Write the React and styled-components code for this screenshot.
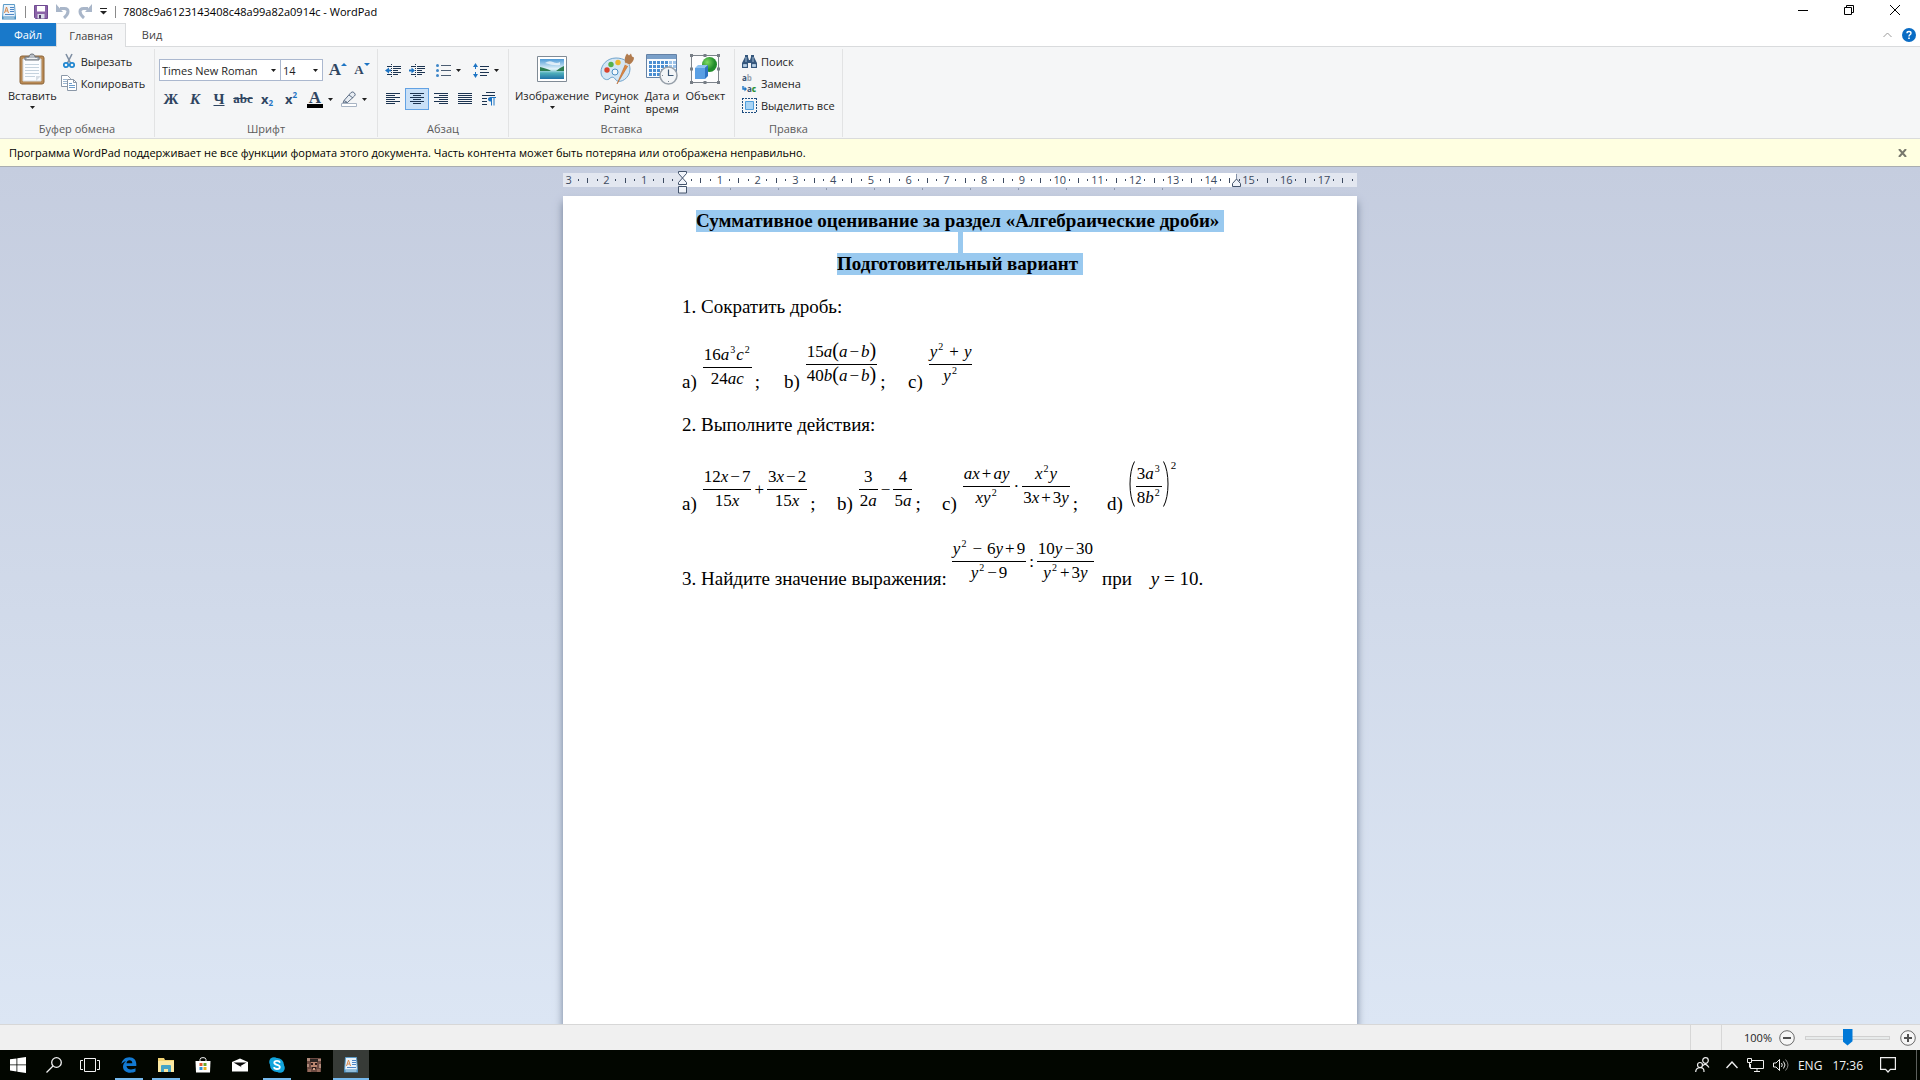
import React, { useState } from 'react';
import styled, { createGlobalStyle } from 'styled-components';

const rulerLabels = ['3', '2', '1', '', ...Array.from({ length: 17 }, (_, i) => String(i + 1))];

/* ---------- icons ---------- */

const Arrow = () => (
  <svg width="5" height="3" viewBox="0 0 5 3"><path d="M0 0h5L2.5 3z" fill="#1e1e1e" /></svg>
);

const WordPadIcon = () => (
  <svg width="16" height="16" viewBox="0 0 16 16">
    <path d="M2.5.5h11l1 13.500h-13z" fill="#e9f3fb" stroke="#5b9bc8" />
    <path d="M1 12.500h14v3H1z" fill="#4a8fc0" />
    <path d="M2.500 13.500h11v1h-11z" fill="#d5e8f5" />
    <path d="M3.500 9 5.500 3l2 6M4.200 7h2.600" fill="none" stroke="#d98a4e" />
    <path d="M9 3.500h4M9 5.500h4M9 7.500h4M4 10.500h9" stroke="#4f86c6" />
  </svg>
);

const SaveIcon = () => (
  <svg width="14" height="14" viewBox="0 0 14 14">
    <path d="M.5.5h13v13H1.500l-1-1z" fill="#8b63a8" stroke="#6f4a91" />
    <path d="M3 1h8v5.500H3z" fill="#fff" />
    <path d="M3.500 9h7v4.500h-7z" fill="#d9dce8" />
    <path d="M5 10h2v3.500H5z" fill="#4b3b68" />
  </svg>
);

const UndoIcon = ({ flip }) => (
  <svg width="14" height="15" viewBox="0 0 14 15">
    <g transform={flip ? 'translate(14 0) scale(-1 1)' : undefined} fill="none" stroke="#a9b6c9">
      <path d="M4 4.500h4.500c4.500 0 5 5-.5 9.500" strokeWidth="3" />
      <path d="M0 0v8h7z" fill="#a9b6c9" stroke="none" />
    </g>
  </svg>
);

const CustomizeIcon = () => (
  <svg width="7" height="7" viewBox="0 0 7 7"><path d="M0 .5h7" stroke="#222" /><path d="M0 3h7L3.500 6.500z" fill="#222" /></svg>
);

const PasteIcon = () => (
  <svg width="26" height="32" viewBox="0 0 26 32">
    <rect x="1" y="3" width="24" height="28" rx="2" fill="#b98a55" stroke="#8c6539" />
    <path d="M4 6h18v22H4z" fill="#fbfdff" stroke="#d3d9df" />
    <path d="M6 11.500h14M6 14.500h14M6 17.500h14M6 20.500h14M6 23.500h10" stroke="#c5d3de" />
    <path d="M17 28v-5h5z" fill="#d6dde4" />
    <path d="M6 7V4h4c0-4 6-4 6 0h4v3z" fill="#b8bec6" stroke="#6d747c" />
    <path d="M8 5.500h10" stroke="#eef1f4" />
  </svg>
);

const CutIcon = () => (
  <svg width="16" height="16" viewBox="0 0 16 16" fill="none">
    <path d="M5 1l4.500 9M11 1 6.500 10" stroke="#7e8fa3" strokeWidth="1.600" />
    <circle cx="5" cy="12" r="2.200" stroke="#1f86d0" strokeWidth="1.700" />
    <circle cx="11" cy="12" r="2.200" stroke="#1f86d0" strokeWidth="1.700" />
  </svg>
);

const CopyIcon = () => (
  <svg width="16" height="16" viewBox="0 0 16 16" stroke="#8b98a8">
    <path d="M.5.5h6l3 3v8h-9z" fill="#fff" />
    <path d="M2 4.500h4M2 6.500h4M2 8.500h4" stroke="#9cb6d0" />
    <path d="M6.500 4.500h6l3 3v8h-9z" fill="#fff" />
    <path d="M12.500 4.500v3h3" fill="none" />
    <path d="M8 8.500h3M8 10.500h6M8 12.500h6" stroke="#6c9ccb" />
  </svg>
);

const HighlightIcon = () => (
  <svg width="16" height="16" viewBox="0 0 16 16">
    <path d="M3 9.500 10 1.500q2-1.500 3.500.5t0 3L6.500 11.500 2 12z" fill="#e8edf3" stroke="#5e6f86" />
    <path d="M3 9.500 6.500 11.500M8 4l4 3" stroke="#5e6f86" />
    <path d="M.5 12.500h15v3H.5z" fill="#fff" stroke="#a8b4c4" />
  </svg>
);

// every paragraph icon is a stack of horizontal strokes [x, width]
const linesFor = {
  left: [[0, 14], [0, 9], [0, 14], [0, 9], [0, 14], [0, 9]],
  center: [[0, 14], [3, 8], [0, 14], [3, 8], [0, 14], [3, 8]],
  right: [[0, 14], [5, 9], [0, 14], [5, 9], [0, 14], [5, 9]],
  justify: [[0, 14], [0, 14], [0, 14], [0, 14], [0, 14], [0, 14]],
};

const AlignIcon = ({ kind }) => (
  <svg width="14" height="12" viewBox="0 0 14 12">
    {linesFor[kind].map(([x, w], i) => <path key={i} d={`M${x} ${i * 2 + 0.5}h${w}`} stroke="#1c3451" />)}
  </svg>
);

const IndentIcon = ({ increase }) => (
  <svg width="16" height="13" viewBox="0 0 16 13">
    <path d="M2 2.500h4M8 2.500h8M8 4.500h8M8 6.500h5M8 8.500h8M2 10.500h4M8 10.500h5" stroke="#1c3451" />
    <path d="M6.500 0v13" stroke="#1c3451" strokeDasharray="1 1" />
    <path d={increase ? 'M0 5.500h2.500v-2l3.500 3-3.500 3v-2H0z' : 'M6 5.500H4v-2L0 6.500l4 3v-2h2z'} fill="#1d74c4" />
  </svg>
);

const BulletsIcon = () => (
  <svg width="15" height="13" viewBox="0 0 15 13">
    <g fill="#3f87c9"><circle cx="1.500" cy="1.500" r="1.500" /><circle cx="1.500" cy="6.500" r="1.500" /><circle cx="1.500" cy="11.500" r="1.500" /></g>
    <path d="M5 1.500h10M5 6.500h10M5 11.500h10" stroke="#4b5d73" />
  </svg>
);

const SpacingIcon = () => (
  <svg width="16" height="15" viewBox="0 0 16 15">
    <path d="M2.500 1v13" stroke="#1d74c4" strokeDasharray="5 3" />
    <path d="M0 4 2.500 0 5 4zM0 11l2.500 4L5 11z" fill="#1d74c4" />
    <path d="M7 3.500h9M7 6.500h7M7 9.500h9M7 12.500h7" stroke="#1c3451" />
  </svg>
);

const PilcrowIcon = () => (
  <svg width="14" height="14" viewBox="0 0 14 14">
    <path d="M4 .5h9M0 3.500h13M0 6.500h5M0 9.500h5M0 12.500h5" stroke="#1c3451" />
    <path d="M9.500 5.500v8M12 5.500v8M8 5.500h6" stroke="#1d74c4" />
    <path d="M9.500 5v4.500Q6 9.500 6 7.200T9.500 5z" fill="#1d74c4" />
  </svg>
);

const ImageIcon = () => (
  <svg width="30" height="30" viewBox="0 0 30 30">
    <defs>
      <linearGradient id="sky" x2="0" y2="1"><stop stopColor="#4d9ad6" /><stop offset="0.5" stopColor="#e6f5fb" /><stop offset="0.7" stopColor="#4fb0bb" /><stop offset="1" stopColor="#1f72a8" /></linearGradient>
    </defs>
    <path d="M.5 2.500h29v25H.5z" fill="#fff" stroke="#808b96" />
    <path d="M3 5h24v20H3z" fill="url(#sky)" />
    <path d="M3 13q4 1 7 2t4 2H3zM27 12q-5 2-8 5h8z" fill="#2d7d52" />
    <path d="M8 9q4-3 8-1t7 0v3q-6 1-15-2z" fill="#fff" opacity="0.700" />
  </svg>
);

const PaintIcon = () => (
  <svg width="34" height="32" viewBox="0 0 34 32">
    <path d="M16 5C7 5 1 12 1 19c0 6 5 9 8 7 3-3 5-2 7 1 3 4 14-1 14-11 0-7-6-11-14-11z" fill="#d3e6f5" stroke="#6fa3cc" />
    <circle cx="15" cy="19" r="3" fill="#f4f8fb" stroke="#4d8fc4" />
    <circle cx="7" cy="17" r="2.700" fill="#d9432e" />
    <circle cx="11" cy="11.500" r="2.700" fill="#55b04b" />
    <circle cx="18" cy="9.500" r="2.700" fill="#edb52b" />
    <path d="m17 31 9-21 3 1z" fill="#dd8842" stroke="#b96528" strokeWidth="0.600" />
    <path d="M25 10q-1-6 2-9.500l2 2 2-2 1 3 2 1q0 4-4.500 7z" fill="#b17b4e" />
    <path d="m25 10.500 4 2" stroke="#d8dde2" strokeWidth="2" />
  </svg>
);

const CalendarIcon = () => (
  <svg width="32" height="32" viewBox="0 0 32 32">
    <path d="M.5 1.500h30v23H.5z" fill="#f8fbfe" stroke="#6482a6" />
    <path d="M1 2h29v4H1z" fill="#7aa0c9" />
    {[8, 12, 16, 20].map(y => [3, 7, 11, 15, 19, 23, 27].map(x => (
      <path key={`${x}-${y}`} d={`M${x} ${y}h3v3h-3z`} fill={x > 20 ? '#9cc2e8' : '#4a8ed2'} />
    )))}
    <circle cx="22.500" cy="22.500" r="8.500" fill="#f3f5f7" stroke="#97a0aa" strokeWidth="1.500" />
    <path d="M22.500 16.500v6h5" fill="none" stroke="#3c5876" strokeWidth="1.200" />
    <path d="M22.500 28v1M16 22.500h1" stroke="#7a8694" />
  </svg>
);

const ObjectIcon = () => (
  <svg width="30" height="30" viewBox="0 0 30 30">
    <defs>
      <radialGradient id="ball" cx="0.350" cy="0.350"><stop stopColor="#7edb62" /><stop offset="1" stopColor="#218c2b" /></radialGradient>
    </defs>
    <path d="M1.500 1.500h27v27h-27z" fill="#fdfdfe" stroke="#7d848c" />
    <path d="M0 0h3v3H0zM13.500 0h3v3h-3zM27 0h3v3h-3zM0 13.500h3v3H0zM27 13.500h3v3h-3zM0 27h3v3H0zM13.500 27h3v3h-3zM27 27h3v3h-3z" fill="#777e86" />
    <circle cx="19.500" cy="10.500" r="7.500" fill="url(#ball)" />
    <path d="M5 14h10v11H5z" fill="#5a9fe4" />
    <path d="m5 14 3-3h10l-3 3z" fill="#8ec2f2" />
    <path d="m15 14 3-3v11l-3 3z" fill="#2f74c4" />
  </svg>
);

const FindIcon = () => (
  <svg width="15" height="13" viewBox="0 0 15 13">
    <path d="M3 0h3v2l1 3h1l1-3V0h3v2l3 6v5H9V8H6v5H0V8l3-6z" fill="#35577d" />
    <path d="M1.500 9.500h3v2h-3zM10.500 9.500h3v2h-3zM4 2v5M11 2v5" fill="#b9d0e6" stroke="#b9d0e6" strokeWidth="0.800" />
  </svg>
);

const ReplaceArrow = () => (
  <svg width="5" height="6" viewBox="0 0 5 6">
    <path d="M1 0v3h2" fill="none" stroke="#1d74c4" strokeWidth="1.400" /><path d="M2.500.5v5L5 3z" fill="#1d74c4" />
  </svg>
);

const SelectAllIcon = () => (
  <svg width="15" height="15" viewBox="0 0 15 15">
    <path d="M0 .5h15M0 14.500h15M.5 0v15M14.500 0v15" fill="none" stroke="#1c4d80" strokeDasharray="2 1" />
    <path d="M3.500 3.500h8v8h-8z" fill="#a9d4f5" stroke="#4f9edb" />
  </svg>
);

const HelpIcon = () => (
  <svg width="14" height="14" viewBox="0 0 14 14">
    <circle cx="7" cy="7" r="7" fill="#0a6cc4" />
    <path d="M5 5.200Q5 3.500 7 3.500t2 1.700q0 1-1.200 1.600Q7 7.200 7 8.500" fill="none" stroke="#fff" strokeWidth="1.400" />
    <path d="M6.200 9.600h1.600v1.500H6.200z" fill="#fff" />
  </svg>
);

const MarkerIcon = ({ kind }) => (
  <svg width="9" height="23" viewBox="0 0 9 23" fill="#f1f4fa" stroke="#44546c">
    {kind === 'left' ? (
      <>
        <path d="M.5.5h8v2l-4 4.500-4-4.500z" />
        <path d="M.5 13.500v-2l4-4.500 4 4.500v2z" />
        <path d="M.5 15.500h8v6.500h-8z" />
      </>
    ) : (
      <><path d="M4.500 3v5" stroke="#8390a6" /><path d="M.5 15.500v-3l4-4.500 4 4.500v3z" /></>
    )}
  </svg>
);

const ZoomIcon = ({ plus }) => (
  <svg width="16" height="16" viewBox="0 0 16 16">
    <circle cx="8" cy="8" r="7.300" fill="#f6f6f6" stroke="#6a6a6a" />
    <path d={plus ? 'M4 8h8M8 4v8' : 'M4 8h8'} stroke="#505050" strokeWidth="2" />
  </svg>
);

const taskIcons = {
  start: <svg width="16" height="16" viewBox="0 0 16 16"><path d="M0 2.300 6.500 1.400v6.100H0zM7.300 1.300 16 0v7.500H7.300zM0 8.300h6.500v6.200L0 13.600zM7.300 8.300H16V16l-8.700-1.300z" fill="#fff" /></svg>,
  search: <svg width="16" height="16" viewBox="0 0 16 16" fill="none" stroke="#f2f2f2" strokeWidth="1.300"><circle cx="10.500" cy="5.500" r="4.800" /><path d="M7 9 .5 15.500" /></svg>,
  tasks: <svg width="20" height="14" viewBox="0 0 20 14" fill="none" stroke="#f2f2f2"><path d="M4.500.5h11v13h-11zM3 2.500H.5v9H3M17 2.500h2.500v9H17" /></svg>,
  edge: <svg width="16" height="16" viewBox="0 0 16 16"><path d="M.5 7C1 3 4 .2 8.300.2c4.700 0 7 3.300 7 6.800v2H5.500c.2 2.500 2.300 3.500 4.500 3.500 1.800 0 3.300-.5 4.500-1.200v3.300c-1.400.8-3.200 1.200-5.200 1.200C5 15.800 2 13.400 2 9.800c0-2.700 1.300-4.400 3-5.500C3.200 4.600 1.500 5.500.5 7zm5-.8h5.800c0-1.900-1-2.900-2.800-2.900-1.700 0-2.800 1.100-3 2.900z" fill="#1379d2" /></svg>,
  explorer: <svg width="18" height="16" viewBox="0 0 18 16"><path d="M1 1h6l1 2h9v12H1z" fill="#f2d374" /><path d="M1 4h16v11H1z" fill="#fbe8a2" /><path d="M4 15V9q0-1 1-1h8q1 0 1 1v6h-3v-3H7v3z" fill="#45a3c6" /></svg>,
  store: <svg width="16" height="16" viewBox="0 0 16 16"><path d="M5 4V2.500Q5 .6 8 .6t3 1.900V4" fill="none" stroke="#eee" /><path d="M.5 4h15L15 15.500H1z" fill="#fff" /><path d="M4.500 6h3v3h-3z" fill="#e1592b" /><path d="M8.500 6h3v3h-3z" fill="#6ba52b" /><path d="M4.500 10h3v3h-3z" fill="#2c93d6" /><path d="M8.500 10h3v3h-3z" fill="#eab11d" /></svg>,
  mail: <svg width="16" height="14" viewBox="0 0 16 14"><path d="M0 4 8 .5 16 4v9.500H0z" fill="#fff" /><path d="M1.500 4.500h13L8.500 8 10 9.500z" fill="#0a0a0a" /></svg>,
  skype: <svg width="16" height="16" viewBox="0 0 16 16"><circle cx="5" cy="5" r="4.800" fill="#12a5dd" /><circle cx="11" cy="11" r="4.800" fill="#12a5dd" /><circle cx="8" cy="8" r="7" fill="#12a5dd" /><path d="M11 5.600Q10.400 3.900 8 3.900 5.300 3.900 5.300 5.800c0 2.600 5.500 1.500 5.500 4.100 0 1.400-1.300 2.100-2.800 2.100q-2.700 0-3-1.900" fill="none" stroke="#fff" strokeWidth="1.800" /></svg>,
  picture: <svg width="14" height="14" viewBox="0 0 14 14"><path d="M0 0h14v14H0z" fill="#6d4b42" /><path d="M3 1h8v3H3z" fill="#2c2422" /><path d="M4 4h6v5H4z" fill="#b98670" /><path d="M0 0h3v3H0zM11 1h3v2h-3zM0 6h2v3H0zM12 6h2v4h-2z" fill="#b08a7a" /><path d="M4 5h2v2H4zM8 5h2v2H8zM5 9h4v2H5z" fill="#2c1c1a" /><path d="M1 11h3v3H1zM10 11h3v3h-3z" fill="#93695a" /><path d="M6 10h2v2H6z" fill="#d5a58d" /></svg>,
  wordpad: <WordPadIcon />,
};

/* ---------- formulas ---------- */

const Frac = ({ lift, top, bottom }) => (
  <Fraction $lift={lift}><Numerator>{top}</Numerator><Denominator>{bottom}</Denominator></Fraction>
);
const Sq = ({ n = 2 }) => <Power>{n}</Power>;

function App() {
  const [zoom, setZoom] = useState(50);

  return (
    <>
      <GlobalStyle />
      <Window>
        <TitleBar>
          <QuickAccess>
            <WordPadIcon />
            <Separator />
            <IconButton aria-label="Сохранить"><SaveIcon /></IconButton>
            <IconButton aria-label="Отменить"><UndoIcon /></IconButton>
            <IconButton aria-label="Вернуть"><UndoIcon flip /></IconButton>
            <IconButton aria-label="Настройка панели"><CustomizeIcon /></IconButton>
            <Separator />
          </QuickAccess>
          <Title>7808c9a6123143408c48a99a82a0914c - WordPad</Title>
          <CaptionButton aria-label="Свернуть"><svg width="10" height="10"><path d="M0 5.500h10" stroke="#000" /></svg></CaptionButton>
          <CaptionButton aria-label="Свернуть в окно"><svg width="10" height="10" fill="none" stroke="#000"><path d="M.5 2.500h7v7h-7zM2.500 2.500v-2h7v7h-2" /></svg></CaptionButton>
          <CaptionButton aria-label="Закрыть"><svg width="10" height="10" stroke="#000"><path d="m0 0 10 10M10 0 0 10" /></svg></CaptionButton>
        </TitleBar>

        <TabBar>
          <FileTab>Файл</FileTab>
          <Tab $active>Главная</Tab>
          <Tab>Вид</Tab>
          <TabTools>
            <IconButton aria-label="Свернуть ленту"><svg width="9" height="6" fill="none" stroke="#9a9a9a"><path d="m.5 5 4-4 4 4" /></svg></IconButton>
            <IconButton aria-label="Справка"><HelpIcon /></IconButton>
          </TabTools>
        </TabBar>

        <Ribbon>
          <Group $width={155}>
            <ClipboardTools>
              <BigButton><PasteIcon /><span>Вставить</span><Arrow /></BigButton>
              <SmallColumn>
                <SmallButton><CutIcon />Вырезать</SmallButton>
                <SmallButton><CopyIcon />Копировать</SmallButton>
              </SmallColumn>
            </ClipboardTools>
            <GroupName>Буфер обмена</GroupName>
          </Group>

          <Group $width={223}>
            <FontTools>
              <ToolRow>
                <Combo $width={122}>
                  <select aria-label="Шрифт" defaultValue="Times New Roman"><option>Times New Roman</option></select>
                  <Arrow />
                </Combo>
                <Combo $width={43} $joined>
                  <select aria-label="Размер шрифта" defaultValue="14"><option>14</option></select>
                  <Arrow />
                </Combo>
                <Letter $size={17} $first>A<Caret $up /></Letter>
                <Letter $size={13}>A<Caret /></Letter>
              </ToolRow>
              <ToolRow>
                <Letter $size={15}>Ж</Letter>
                <Letter $size={15} $italic>К</Letter>
                <Letter $size={15} $underline>Ч</Letter>
                <Letter $size={13} $strike>abc</Letter>
                <Letter $size={13} $sans>x<sub>2</sub></Letter>
                <Letter $size={13} $sans>x<sup>2</sup></Letter>
                <ColorButton aria-label="Цвет текста"><b>A</b></ColorButton>
                <Arrow />
                <IconButton aria-label="Цвет выделения"><HighlightIcon /></IconButton>
                <Arrow />
              </ToolRow>
            </FontTools>
            <GroupName>Шрифт</GroupName>
          </Group>

          <Group $width={131}>
            <ParagraphTools>
              <ToolRow>
                <ParaButton aria-label="Уменьшить отступ"><IndentIcon /></ParaButton>
                <ParaButton aria-label="Увеличить отступ"><IndentIcon increase /></ParaButton>
                <ParaButton $wide aria-label="Маркеры"><BulletsIcon /><Arrow /></ParaButton>
                <ParaButton $wide aria-label="Интервал"><SpacingIcon /><Arrow /></ParaButton>
              </ToolRow>
              <ToolRow>
                <ParaButton aria-label="По левому краю"><AlignIcon kind="left" /></ParaButton>
                <ParaButton $active aria-label="По центру"><AlignIcon kind="center" /></ParaButton>
                <ParaButton aria-label="По правому краю"><AlignIcon kind="right" /></ParaButton>
                <ParaButton aria-label="По ширине"><AlignIcon kind="justify" /></ParaButton>
                <ParaButton aria-label="Абзац"><PilcrowIcon /></ParaButton>
              </ToolRow>
            </ParagraphTools>
            <GroupName>Абзац</GroupName>
          </Group>

          <Group $width={226}>
            <InsertTools>
              <BigButton><ImageIcon /><span>Изображение</span><Arrow /></BigButton>
              <BigButton><PaintIcon /><span>Рисунок<br />Paint</span></BigButton>
              <BigButton><CalendarIcon /><span>Дата и<br />время</span></BigButton>
              <BigButton><ObjectIcon /><span>Объект</span></BigButton>
            </InsertTools>
            <GroupName>Вставка</GroupName>
          </Group>

          <Group $width={108}>
            <EditTools>
              <SmallButton><FindIcon />Поиск</SmallButton>
              <SmallButton>
                <ReplaceMark>
                  <span>a<i>b</i></span>
                  <span><ReplaceArrow />a<b>c</b></span>
                </ReplaceMark>
                Замена
              </SmallButton>
              <SmallButton><SelectAllIcon />Выделить все</SmallButton>
            </EditTools>
            <GroupName>Правка</GroupName>
          </Group>
        </Ribbon>

        <InfoBar>
          <span>Программа WordPad поддерживает не все функции формата этого документа. Часть контента может быть потеряна или отображена неправильно.</span>
          <IconButton aria-label="Закрыть сообщение">
            <svg width="9" height="8" stroke="#77776c" strokeWidth="2"><path d="m1 0 7 8M8 0 1 8" /></svg>
          </IconButton>
        </InfoBar>

        <Desk>
          <Ruler>
            <Scale>
              {rulerLabels.map((label, i) => (
                <Centimeter key={i}>
                  <span>{label}</span><Dot /><HalfMark /><Dot />
                </Centimeter>
              ))}
            </Scale>
            <TabStops />
            <Marker $side="left"><MarkerIcon kind="left" /></Marker>
            <Marker $side="right"><MarkerIcon kind="right" /></Marker>
          </Ruler>

          <Page>
            <Heading><mark>Суммативное оценивание за раздел «Алгебраические дроби» </mark></Heading>
            <Blank><mark /></Blank>
            <Heading><mark>Подготовительный вариант </mark></Heading>
            <Blank />
            <Line>1. Сократить дробь:</Line>
            <Blank />
            <Formulas $height={54} $columns="102px 124px auto">
              <Term>
                <Letters>a)</Letters>
                <Frac top={<>16<i>a</i><Sq n={3} /><i>c</i><Sq /></>} bottom={<>24<i>ac</i></>} />
                ;
              </Term>
              <Term>
                <Letters>b)</Letters>
                <Frac lift top={<>15<i>a</i><Paren>(</Paren><i>a</i><Op>−</Op><i>b</i><Paren>)</Paren></>} bottom={<>40<i>b</i><Paren>(</Paren><i>a</i><Op>−</Op><i>b</i><Paren>)</Paren></>} />
                ;
              </Term>
              <Term>
                <Letters>c)</Letters>
                <Frac lift top={<><i>y</i><Sq /><Op $wide>+</Op><i>y</i></>} bottom={<><i>y</i><Sq /></>} />
              </Term>
            </Formulas>
            <Blank />
            <Line>2. Выполните действия:</Line>
            <Blank />
            <Formulas $height={58} $columns="155px 105px 165px auto">
              <Term>
                <Letters>a)</Letters>
                <Expression>
                  <Frac top={<>12<i>x</i><Op>−</Op>7</>} bottom={<>15<i>x</i></>} />
                  <Sign>+</Sign>
                  <Frac top={<>3<i>x</i><Op>−</Op>2</>} bottom={<>15<i>x</i></>} />
                </Expression>
                ;
              </Term>
              <Term>
                <Letters>b)</Letters>
                <Expression>
                  <Frac top="3" bottom={<>2<i>a</i></>} />
                  <Sign>−</Sign>
                  <Frac top="4" bottom={<>5<i>a</i></>} />
                </Expression>
                ;
              </Term>
              <Term>
                <Letters>c)</Letters>
                <Expression>
                  <Frac lift top={<><i>ax</i><Op>+</Op><i>ay</i></>} bottom={<><i>xy</i><Sq /></>} />
                  <Sign $lift>·</Sign>
                  <Frac lift top={<><i>x</i><Sq /><i>y</i></>} bottom={<>3<i>x</i><Op>+</Op>3<i>y</i></>} />
                </Expression>
                ;
              </Term>
              <Term>
                <Letters>d)</Letters>
                <Expression>
                  <Fence width="7" height="46" viewBox="0 0 7 46"><path d="M5.500.5C-.5 11-.5 35 5.500 45.500" /></Fence>
                  <Frac lift top={<>3<i>a</i><Sq n={3} /></>} bottom={<>8<i>b</i><Sq /></>} />
                  <Fence width="7" height="46" viewBox="0 0 7 46"><path d="M1.500.5C7.500 11 7.500 35 1.500 45.500" /></Fence>
                  <OuterPower>2</OuterPower>
                </Expression>
              </Term>
            </Formulas>
            <Blank />
            <Formulas $height={54} $columns="auto auto 1fr">
              <Line>3. Найдите значение выражения:</Line>
              <Expression $inline>
                <Frac lift top={<><i>y</i><Sq /><Op $wide>−</Op>6<i>y</i><Op>+</Op>9</>} bottom={<><i>y</i><Sq /><Op>−</Op>9</>} />
                <Sign $lift>:</Sign>
                <Frac lift top={<>10<i>y</i><Op>−</Op>30</>} bottom={<><i>y</i><Sq /><Op>+</Op>3<i>y</i></>} />
              </Expression>
              <Line>при{'\u00a0\u00a0\u00a0 '}<i>y</i> = 10.</Line>
            </Formulas>
          </Page>
        </Desk>

        <StatusBar>
          <StatusCell />
          <StatusCell />
          <ZoomControls>
            <label htmlFor="zoom">100%</label>
            <IconButton aria-label="Уменьшить"><ZoomIcon /></IconButton>
            <ZoomSlider id="zoom" type="range" value={zoom} onChange={e => setZoom(e.target.value)} />
            <IconButton aria-label="Увеличить"><ZoomIcon plus /></IconButton>
          </ZoomControls>
        </StatusBar>

        <Taskbar>
          <TaskButton aria-label="Пуск">{taskIcons.start}</TaskButton>
          <TaskButton aria-label="Поиск">{taskIcons.search}</TaskButton>
          <TaskButton aria-label="Представление задач">{taskIcons.tasks}</TaskButton>
          <Apps>
            <TaskButton $running aria-label="Edge">{taskIcons.edge}</TaskButton>
            <TaskButton $running aria-label="Проводник">{taskIcons.explorer}</TaskButton>
            <TaskButton aria-label="Магазин">{taskIcons.store}</TaskButton>
            <TaskButton aria-label="Почта">{taskIcons.mail}</TaskButton>
            <TaskButton $running aria-label="Skype">{taskIcons.skype}</TaskButton>
            <TaskButton aria-label="Игра">{taskIcons.picture}</TaskButton>
            <TaskButton $running $active aria-label="WordPad">{taskIcons.wordpad}</TaskButton>
          </Apps>
          <Tray>
            <svg width="15" height="16" viewBox="0 0 15 16" fill="none" stroke="#eee" strokeWidth="1.200"><circle cx="10.500" cy="3.500" r="2.800" /><path d="M7.500 9q3-4 6.500 1.500" /><circle cx="5" cy="8" r="2.500" /><path d="M.7 15q0-4 4.300-4.300T9 15" /></svg>
            <svg width="12" height="8" viewBox="0 0 12 8" fill="none" stroke="#eee" strokeWidth="1.400"><path d="m.5 7 5.500-6 5.500 6" /></svg>
            <svg width="17" height="14" viewBox="0 0 17 14" fill="none" stroke="#eee"><path d="M5 2.500h11.500v8H3.500V6M10 10.500v3M7 13.500h6M.5.5h4v4h-4zM2.500 4.500v5" /></svg>
            <svg width="16" height="14" viewBox="0 0 16 14" fill="none" stroke="#eee"><path d="M.5 5H3l3.500-3.500v11L3 9H.5zM8.500 5q1.500 2 0 4M10.500 3.500q3 3.500 0 7" /><path d="M12.500 1.500q5 5.500 0 11" stroke="#888" /></svg>
            <span>ENG</span>
            <Clock>17:36</Clock>
            <svg width="16" height="16" viewBox="0 0 16 16" fill="none" stroke="#eee" strokeWidth="1.200"><path d="M.6.600h14.800v11.800h-5L8 15l-2.400-2.600h-5z" /></svg>
          </Tray>
        </Taskbar>
      </Window>
    </>
  );
}

const GlobalStyle = createGlobalStyle`
  * {
    box-sizing: border-box;
  }

  body {
    margin: 0;
    font-family: "Open Sans", "Noto Sans", sans-serif;
    font-size: 11px;
    color: #1e1e1e;
  }

  button, select {
    padding: 0;
    border: 0;
    background: none;
    font: inherit;
    color: inherit;
  }

  svg {
    display: block;
    flex: none;
  }
`;

const Window = styled.div`
  display: flex;
  flex-direction: column;
  min-height: 100vh;
  background: #fff;
`;

const TitleBar = styled.header`
  display: flex;
  height: 23px;
  padding-right: 2px;
`;

const QuickAccess = styled.div`
  display: flex;
  align-items: center;
  gap: 8px;
  padding-left: 1px;
`;

const Separator = styled.div`
  width: 1px;
  height: 12px;
  background: #8a8a8a;
`;

const IconButton = styled.button`
  display: flex;
  align-items: center;
  justify-content: center;
`;

const Title = styled.h1`
  flex: 1;
  margin: 0;
  padding-left: 7px;
  font-size: 11px;
  font-weight: 400;
  line-height: 23px;
  color: #000;
`;

const CaptionButton = styled.button`
  display: flex;
  align-items: center;
  justify-content: center;
  width: 46px;
  height: 20px;
`;

const TabBar = styled.nav`
  display: flex;
  height: 24px;
  border-bottom: 1px solid #d9dbdd;
`;

const FileTab = styled.button`
  width: 56px;
  height: 23px;
  background: #1979ca;
  color: #fff;
`;

const Tab = styled.button`
  min-width: ${({ $active }) => ($active ? '70px' : '52px')};
  height: ${({ $active }) => ($active ? '24px' : '23px')};
  border: ${({ $active }) => ($active ? '1px solid #d9dbdd' : '0')};
  border-bottom: 0;
  background: ${({ $active }) => ($active ? '#f5f6f7' : 'none')};
  color: #444;
`;

const TabTools = styled.div`
  display: flex;
  align-items: center;
  gap: 10px;
  margin-left: auto;
  padding-right: 4px;
`;

const Ribbon = styled.section`
  display: flex;
  padding: 2px 0 1px;
  border-bottom: 1px solid #dadbdc;
  background: #f5f6f7;
`;

const Group = styled.div`
  display: flex;
  flex-direction: column;
  justify-content: space-between;
  width: ${({ $width }) => $width}px;
  height: 88px;
  border-right: 1px solid #e2e3e4;
`;

const GroupName = styled.div`
  line-height: 16px;
  text-align: center;
  color: #5a5a5a;
`;

const ClipboardTools = styled.div`
  display: flex;
  gap: 4px;
  padding: 4px 0 0 8px;
`;

const BigButton = styled.button`
  display: flex;
  flex-direction: column;
  align-items: center;

  > svg:first-child {
    height: 32px;
  }

  > span {
    margin: 4px 0;
    line-height: 13px;
  }
`;

const SmallColumn = styled.div`
  display: flex;
  flex-direction: column;
  margin-top: -3px;
`;

const SmallButton = styled.button`
  display: flex;
  align-items: center;
  gap: 4px;
  height: 22px;
  white-space: nowrap;
`;

const ReplaceMark = styled.span`
  display: flex;
  flex-direction: column;
  width: 15px;
  font-size: 8px;
  font-weight: 700;
  line-height: 11px;
  color: #34506f;

  span {
    display: flex;
    align-items: center;
  }

  i {
    font-style: normal;
    color: #9aa3ad;
  }

  b {
    color: #2c9137;
  }
`;

const FontTools = styled.div`
  display: flex;
  flex-direction: column;
  gap: 7px;
  padding: 10px 0 0 4px;
`;

const ToolRow = styled.div`
  display: flex;
  align-items: center;
  height: 22px;
`;

const Combo = styled.div`
  display: flex;
  align-items: center;
  width: ${({ $width }) => $width}px;
  height: 22px;
  margin-left: ${({ $joined }) => ($joined ? '-1px' : '0')};
  padding-right: 4px;
  border: 1px solid #abb8cf;
  background: #fff;

  select {
    flex: 1;
    min-width: 0;
    padding-left: 2px;
    appearance: none;
  }
`;

const Letter = styled.button`
  display: flex;
  align-items: baseline;
  justify-content: center;
  width: 24px;
  margin-left: ${({ $first }) => ($first ? '3px' : '0')};
  font-family: ${({ $sans }) => ($sans ? '"Open Sans", sans-serif' : '"Liberation Serif", serif')};
  font-size: ${({ $size }) => $size}px;
  font-weight: 700;
  font-style: ${({ $italic }) => ($italic ? 'italic' : 'normal')};
  line-height: 20px;
  text-decoration: ${({ $underline, $strike }) => ($underline ? 'underline' : $strike ? 'line-through' : 'none')};
  color: #2f4561;

  sub, sup {
    font-size: 8px;
    line-height: 12px;
    color: #1d74c4;
  }

  sub {
    align-self: flex-end;
  }

  sup {
    align-self: flex-start;
  }
`;

const Caret = styled.span`
  align-self: flex-start;
  margin-top: 3px;
  border: 3px solid transparent;
  border-top: ${({ $up }) => ($up ? '0' : '3px solid #1d74c4')};
  border-bottom: ${({ $up }) => ($up ? '3px solid #1d74c4' : '0')};
`;

const ColorButton = styled.button`
  width: 16px;
  height: 18px;
  margin: 0 5px 0 4px;
  border-bottom: 4px solid #000;
  font-family: "Liberation Serif", serif;
  font-size: 17px;
  line-height: 13px;
  color: #2f4561;

  & ~ ${IconButton} {
    margin: 0 5px 0 8px;
  }
`;

const ParagraphTools = styled.div`
  display: flex;
  flex-direction: column;
  gap: 7px;
  padding: 10px 0 0 3px;
`;

const ParaButton = styled.button`
  display: flex;
  align-items: center;
  justify-content: center;
  gap: 5px;
  width: ${({ $wide }) => ($wide ? '38px' : '24px')};
  height: 22px;
  border: 1px solid ${({ $active }) => ($active ? '#62a2e4' : 'transparent')};
  background: ${({ $active }) => ($active ? '#c9e0f7' : 'none')};
`;

const InsertTools = styled.div`
  display: flex;
  align-items: flex-start;
  gap: 6px;
  padding: 4px 0 0 6px;
`;

const EditTools = styled.div`
  display: flex;
  flex-direction: column;
  padding: 1px 0 0 7px;
`;

const InfoBar = styled.div`
  display: flex;
  align-items: center;
  justify-content: space-between;
  height: 28px;
  padding: 0 13px 0 9px;
  border-bottom: 1px solid #a9adb0;
  background: #ffffe1;
  color: #000;
`;

const Desk = styled.main`
  display: flex;
  flex: 1;
  flex-direction: column;
  align-items: center;
  padding-top: 6px;
  overflow: hidden;
  background: linear-gradient(#c5cddf, #dce6f4);
`;

const Ruler = styled.div`
  position: relative;
  width: 794px;
  max-width: 100%;
  height: 23px;
`;

const Scale = styled.div`
  display: flex;
  height: 14px;
  padding-left: 1px;
  background: linear-gradient(90deg, #e3e7f0 119px, #fff 119px calc(100% - 121px), #e3e7f0 calc(100% - 121px));
`;

const Centimeter = styled.div`
  display: grid;
  flex: 1;
  grid-template-columns: repeat(4, 1fr);
  align-items: center;
  justify-items: center;
  line-height: 14px;
  color: #3c4a60;

  span {
    display: flex;
    justify-content: center;
    width: 0;
    font-size: 11px;
  }
`;

const Dot = styled.div`
  width: 1px;
  height: 2px;
  background: #3c4a60;
`;

const HalfMark = styled.div`
  width: 1px;
  height: 5px;
  background: #3c4a60;
`;

const TabStops = styled.div`
  height: 2px;
  margin: 1px 140px 0 120px;
  background: repeating-linear-gradient(90deg, transparent 0 47px, #8e99ad 47px 48px);
`;

const Marker = styled.div`
  position: absolute;
  top: -2px;
  ${({ $side }) => ($side === 'left' ? 'left: 115px' : 'right: 116px')};
`;

const Page = styled.article`
  flex: 1;
  width: 794px;
  max-width: 100%;
  padding: 14px 119px 0;
  background: #fff;
  box-shadow: 0 6px 8px #6f7d95;
  font-family: "Liberation Serif", serif;
  font-size: 19px;
  line-height: 22px;
  color: #000;

  mark {
    background: #99c9ef;
    color: inherit;
    white-space: pre;
  }
`;

const Heading = styled.h2`
  display: flex;
  justify-content: center;
  margin: 0;
  font-size: inherit;
  font-weight: 700;
`;

const Blank = styled.div`
  display: flex;
  justify-content: center;
  height: 21px;

  mark {
    width: 5px;
  }
`;

const Line = styled.p`
  margin: 0;
  white-space: nowrap;
`;

const Formulas = styled.div`
  display: grid;
  grid-template-columns: ${({ $columns }) => $columns};
  align-items: end;
  min-height: ${({ $height }) => $height}px;
`;

const Term = styled.div`
  display: flex;
  align-items: flex-end;
  gap: 3px;
`;

const Letters = styled.span`
  margin-right: 3px;
`;

const Expression = styled.div`
  display: flex;
  align-items: flex-end;
  margin: ${({ $inline }) => ($inline ? '0 8px 0 5px' : '0')};
`;

const Fraction = styled.span`
  display: inline-flex;
  flex-direction: column;
  min-width: 19px;
  margin-bottom: ${({ $lift }) => ($lift ? '7px' : '4px')};
  font-size: 17px;
  line-height: 20px;
  text-align: center;
  white-space: nowrap;
`;

const Numerator = styled.span`
  padding: 0 1px 2px;
  border-bottom: 1px solid #000;
`;

const Denominator = styled.span`
  padding: 1px 1px 0;
`;

const Power = styled.sup`
  margin: 0 1px;
  font-size: 10px;
  line-height: 0;
  vertical-align: 7px;
`;

const Fence = styled.svg`
  margin-bottom: 8px;
  fill: none;
  stroke: #000;
`;

const OuterPower = styled.sup`
  align-self: flex-start;
  margin-left: 2px;
  font-size: 11px;
  line-height: 8px;
`;

const Op = styled.span`
  margin: 0 ${({ $wide }) => ($wide ? '5px' : '2px')};
`;

const Paren = styled.span`
  font-size: 20px;
  line-height: 0;
`;

const Sign = styled.span`
  margin: 0 3px ${({ $lift }) => ($lift ? '18px' : '15px')};
  font-size: 17px;
  line-height: 20px;
`;

const StatusBar = styled.footer`
  display: flex;
  justify-content: flex-end;
  height: 26px;
  border-top: 1px solid #d7d7d7;
  background: #f0f0f0;
`;

const StatusCell = styled.div`
  width: 31px;
  border-right: 1px solid #d7d7d7;
`;

const ZoomControls = styled.div`
  display: flex;
  align-items: center;
  justify-content: flex-end;
  gap: 7px;
  width: 198px;
  padding-right: 4px;
  font-size: 11px;
`;

const ZoomSlider = styled.input`
  width: 85px;
  height: 20px;
  margin: 0 3px;
  appearance: none;
  background: none;

  &::-webkit-slider-runnable-track {
    height: 4px;
    border: 1px solid #d0d0d0;
    background: #e7eaea;
  }

  &::-webkit-slider-thumb {
    width: 10px;
    height: 17px;
    margin-top: -8px;
    appearance: none;
    background: #0078d7;
    clip-path: polygon(0 0, 100% 0, 100% 75%, 50% 100%, 0 75%);
  }
`;

const Taskbar = styled.footer`
  display: flex;
  height: 30px;
  background: #020600;
  color: #f2f2f2;
`;

const TaskButton = styled.button`
  display: flex;
  align-items: center;
  justify-content: center;
  width: 36px;
  height: 30px;
  background:
    linear-gradient(${({ $running }) => ($running ? '#76b9ed, #76b9ed' : 'transparent, transparent')}) bottom / ${({ $active }) => ($active ? '36px' : '28px')} 2px no-repeat,
    ${({ $active }) => ($active ? '#373b37' : 'transparent')};
`;

const Apps = styled.div`
  display: flex;
  gap: 1px;
  margin-left: 3px;
`;

const Tray = styled.div`
  display: flex;
  align-items: center;
  gap: 9px;
  margin: 0 3px 0 auto;
  padding-right: 20px;
  border-right: 1px solid #5c5f5c;
  font-size: 12px;

  svg:first-child {
    margin-right: 7px;
  }
`;

const Clock = styled.time`
  margin: 0 8px 0 1px;
`;

export default App;
